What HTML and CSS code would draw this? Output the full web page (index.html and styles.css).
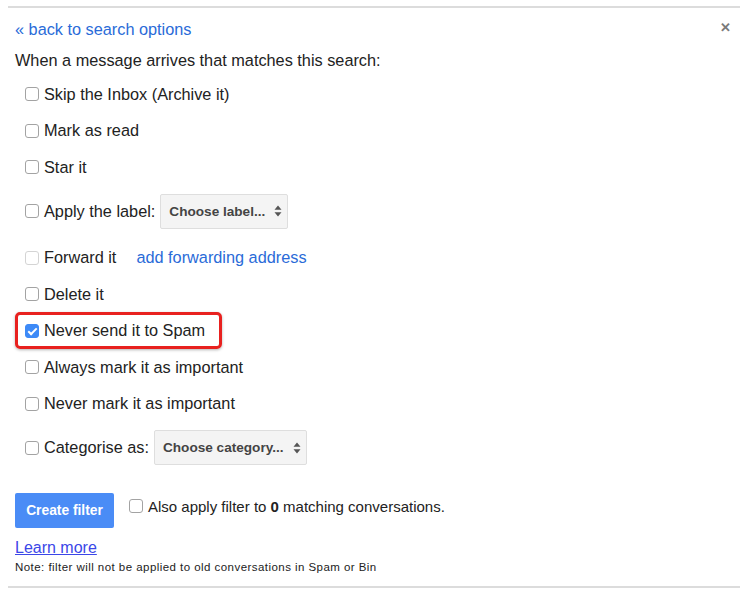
FILE: index.html
```html
<!DOCTYPE html>
<html lang="en">
<head>
    <meta charset="UTF-8">
    <title>Create filter</title>
    <link rel="stylesheet" href="styles.css">
</head>
<body>

<div class="filter-panel">
    <div class="panel-top">
        <a href="#" class="back-link">&laquo; back to search options</a>
        <span class="close-btn">&#x2715;</span>
    </div>
    <p class="intro">When a message arrives that matches this search:</p>

    <div class="options">
        <label class="opt"><input type="checkbox" class="chk">Skip the Inbox (Archive it)</label>
        <label class="opt"><input type="checkbox" class="chk">Mark as read</label>
        <label class="opt"><input type="checkbox" class="chk">Star it</label>
        <div class="opt opt-select">
            <input type="checkbox" class="chk">Apply the label:
            <span class="fake-select">Choose label...
                <svg width="8" height="12" viewBox="0 0 8 12"><path d="M4 0.5 L7.5 4.8 H0.5 Z M4 11.5 L7.5 7.2 H0.5 Z" fill="#555"/></svg>
            </span>
        </div>
        <div class="opt">
            <input type="checkbox" class="chk" disabled>Forward it
            <a href="#" class="fwd-link">add forwarding address</a>
        </div>
        <label class="opt"><input type="checkbox" class="chk">Delete it</label>
        <div class="opt">
            <label class="spam-mark"><input type="checkbox" class="chk" checked>Never send it to Spam</label>
        </div>
        <label class="opt"><input type="checkbox" class="chk">Always mark it as important</label>
        <label class="opt"><input type="checkbox" class="chk">Never mark it as important</label>
        <div class="opt opt-select">
            <input type="checkbox" class="chk">Categorise as:
            <span class="fake-select">Choose category...
                <svg width="8" height="12" viewBox="0 0 8 12"><path d="M4 0.5 L7.5 4.8 H0.5 Z M4 11.5 L7.5 7.2 H0.5 Z" fill="#555"/></svg>
            </span>
        </div>
    </div>

    <div class="actions">
        <button class="create-btn">Create filter</button>
        <label class="also"><input type="checkbox" class="chk"><span>Also apply filter to <b>0</b> matching conversations.</span></label>
    </div>
    <a href="#" class="learn-more">Learn more</a>
    <div class="note">Note: filter will not be applied to old conversations in Spam or Bin</div>
</div>

</body>
</html>
```

FILE: styles.css
```css
body {
    font-family: 'Liberation Sans', Arial, sans-serif;
    margin: 0;
    padding: 0;
    background-color: #fff;
    color: #222;
}
.filter-panel {
    width: 732px;
    margin: 6px 0 0 8px;
    border-top: 2px solid #dcdcdc;
    border-bottom: 2px solid #dcdcdc;
    padding: 11px 9px 12px 7px;
    box-sizing: border-box;
    height: 582px;
}
.panel-top {
    display: flex;
    justify-content: space-between;
    align-items: center;
    height: 20px;
}
.back-link {
    color: #2a6bd8;
    text-decoration: none;
    font-size: 16.3px;
}
.close-btn {
    color: #7a7a7a;
    font-size: 13px;
    font-weight: bold;
    margin-top: -4px;
}
.intro {
    font-size: 16.3px;
    margin: 11px 0 0;
    line-height: 20px;
}
.options {
    display: flex;
    flex-direction: column;
    padding-top: 6px;
}
.opt {
    display: flex;
    align-items: center;
    height: 36.5px;
    padding-left: 10px;
    font-size: 16.3px;
}
.opt-select {
    height: 54px;
    padding-top: 8px;
    padding-bottom: 11px;
    box-sizing: border-box;
}
.chk {
    appearance: none;
    -webkit-appearance: none;
    width: 14px;
    height: 14px;
    margin: 0 5px 0 0;
    border: 1px solid #a3a3a3;
    border-radius: 3px;
    background: #fff;
    box-sizing: border-box;
    position: relative;
    flex-shrink: 0;
}
.chk:disabled {
    border-color: #d4d4d4;
}
.chk:checked {
    background: #3d8af7;
    border-color: #3d8af7;
}
.chk:checked::after {
    content: "";
    position: absolute;
    left: 4px;
    top: 1px;
    width: 3px;
    height: 7px;
    border: solid #fff;
    border-width: 0 2px 2px 0;
    transform: rotate(45deg);
}
.fake-select {
    display: inline-flex;
    align-items: center;
    gap: 9px;
    height: 35px;
    box-sizing: border-box;
    margin-left: 5px;
    padding: 0 5px 0 8px;
    background: #f4f4f4;
    border: 1px solid #dedede;
    border-radius: 2px;
    font-size: 13.6px;
    font-weight: bold;
    color: #444;
}
.fwd-link {
    color: #2a6bd8;
    text-decoration: none;
    margin-left: 20px;
}
.spam-mark {
    display: flex;
    align-items: center;
    height: 37px;
    box-sizing: border-box;
    margin-left: -10px;
    padding: 0 14px 0 7px;
    border: 3px solid #e8211f;
    border-radius: 5px;
    box-shadow: 0 1px 3px rgba(0, 0, 0, 0.3);
}
.actions {
    display: flex;
    align-items: center;
    margin-top: 17px;
}
.create-btn {
    background-color: #4a8cf6;
    color: #fff;
    border: none;
    border-radius: 2px;
    width: 99px;
    height: 35px;
    font-family: inherit;
    font-size: 13.8px;
    font-weight: bold;
    padding: 0;
}
.also {
    display: flex;
    align-items: center;
    margin-left: 15px;
    font-size: 15px;
    margin-top: -9px;
}
.learn-more {
    display: inline-block;
    color: #3b47e8;
    font-size: 16px;
    margin-top: 11px;
}
.note {
    font-size: 11.5px;
    letter-spacing: 0.45px;
    margin-top: 4px;
}
```
